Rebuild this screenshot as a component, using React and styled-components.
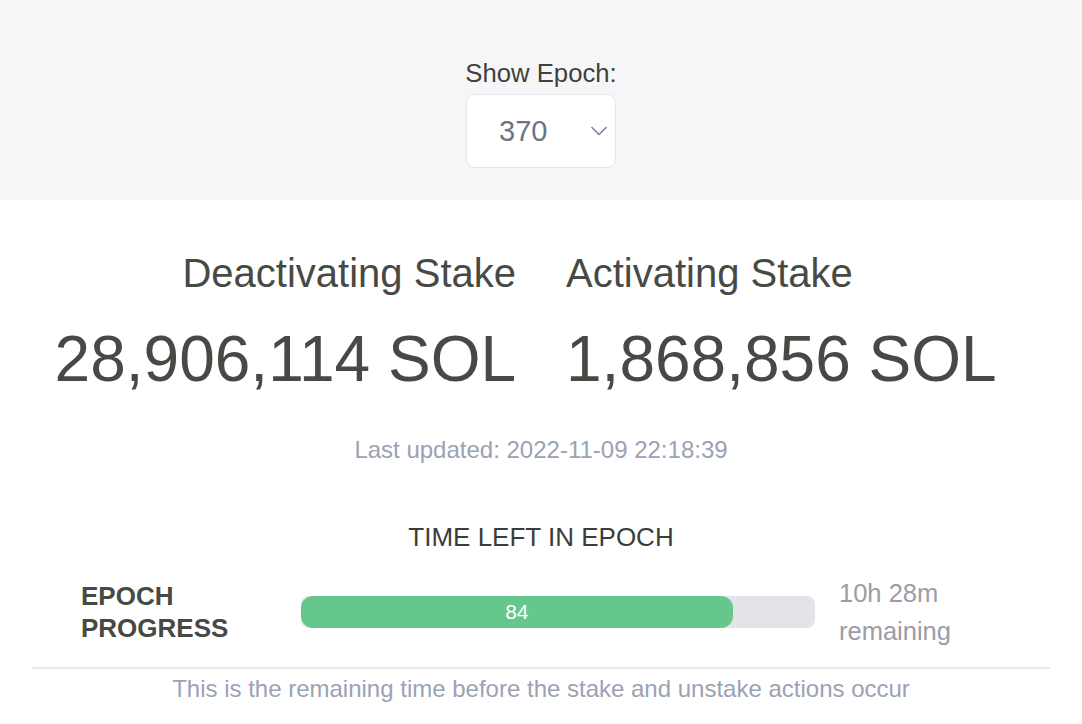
import React from 'react';
import styled, { createGlobalStyle } from 'styled-components';

// Colors:
// ----------------------------------------------------------
// band grey: #f6f6f9
// dark text: #474a44
// slate text: #9ba2b4
// green fill: #66c78c
// track: #e3e3e9
// ----------------------------------------------------------

const GlobalStyle = createGlobalStyle`
    html, body {
        margin: 0;
        padding: 0;
        background: #ffffff;
        font-family: "Liberation Sans", Arial, sans-serif;
    }
`

const Page = styled.div`
    width: 100%;
    min-height: 724px;
    background: #ffffff;
`
const EpochBand = styled.div`
    display: flex;
    flex-direction: column;
    align-items: center;
    height: 200px;
    padding-top: 58px;
    box-sizing: border-box;
    background: #f6f6f9;
`
const BandLabel = styled.div`
    font-size: 25.7px;
    line-height: 30px;
    color: #3f413d;
`
const SelectBox = styled.div`
    display: flex;
    align-items: center;
    justify-content: space-between;
    box-sizing: border-box;
    width: 150px;
    height: 74px;
    margin-top: 6px;
    padding: 0 8px 0 32px;
    background: #ffffff;
    border: 1px solid #e6e6ec;
    border-radius: 9px;
    color: #6b7389;
    font-size: 29px;
`
const StatsGrid = styled.div`
    display: grid;
    grid-template-columns: 1fr 1fr;
    column-gap: 50px;
    padding-top: 50px;
    color: #474a44;
`
const StatCol = styled.div`
    text-align: ${p => p.align};
`
const StatTitle = styled.div`
    font-size: 40px;
    line-height: 46px;
`
const StatValue = styled.div`
    font-size: 64px;
    line-height: 74px;
    margin-top: 26px;
`
const Updated = styled.div`
    margin-top: 40px;
    text-align: center;
    font-size: 24px;
    line-height: 28px;
    color: #9ba2b4;
`
const SectionTitle = styled.div`
    margin-top: 58px;
    text-align: center;
    font-size: 26px;
    line-height: 30px;
    color: #3b3d3a;
`
const ProgressWrap = styled.div`
    margin: 0 32px;
    border-bottom: 2px solid #e8e9ed;
`
const ProgressRow = styled.div`
    display: grid;
    grid-template-columns: 196px 514px 1fr;
    column-gap: 24px;
    align-items: center;
    padding: 22px 49px 17px 49px;
`
const RowLabel = styled.div`
    font-size: 26px;
    font-weight: 700;
    line-height: 32px;
    color: #474a44;
`
const Track = styled.div`
    height: 32px;
    border-radius: 8px;
    background: #e3e3e9;
    overflow: hidden;
`
const Fill = styled.div`
    display: flex;
    align-items: center;
    justify-content: center;
    height: 100%;
    border-radius: 12px;
    background: #66c78c;
    color: #ffffff;
    font-size: 21px;
`
const Remaining = styled.div`
    font-size: 25.5px;
    line-height: 38px;
    color: #9a9da6;
`
const Footnote = styled.div`
    padding-top: 6px;
    text-align: center;
    font-size: 24px;
    line-height: 28px;
    color: #9ba2b4;
`

const Chevron = () => (
    <svg width="16" height="10" viewBox="0 0 16 10" fill="none">
        <path d="M1 1.5 L8 8.5 L15 1.5" stroke="#7b8296" strokeWidth="1.6" strokeLinecap="round" strokeLinejoin="round" />
    </svg>
)

export default function App() {
    const progress = 84;
    return (
        <Page>
            <GlobalStyle />
            <EpochBand>
                <BandLabel>Show Epoch:</BandLabel>
                <SelectBox>
                    <span>370</span>
                    <Chevron />
                </SelectBox>
            </EpochBand>

            <StatsGrid>
                <StatCol align="right">
                    <StatTitle>Deactivating Stake</StatTitle>
                    <StatValue>28,906,114 SOL</StatValue>
                </StatCol>
                <StatCol align="left">
                    <StatTitle>Activating Stake</StatTitle>
                    <StatValue>1,868,856 SOL</StatValue>
                </StatCol>
            </StatsGrid>

            <Updated>Last updated: 2022-11-09 22:18:39</Updated>

            <SectionTitle>TIME LEFT IN EPOCH</SectionTitle>

            <ProgressWrap>
                <ProgressRow>
                    <RowLabel>EPOCH<br />PROGRESS</RowLabel>
                    <Track>
                        <Fill style={{ width: `${progress}%` }}>{progress}</Fill>
                    </Track>
                    <Remaining>10h 28m<br />remaining</Remaining>
                </ProgressRow>
            </ProgressWrap>

            <Footnote>This is the remaining time before the stake and unstake actions occur</Footnote>
        </Page>
    );
}
